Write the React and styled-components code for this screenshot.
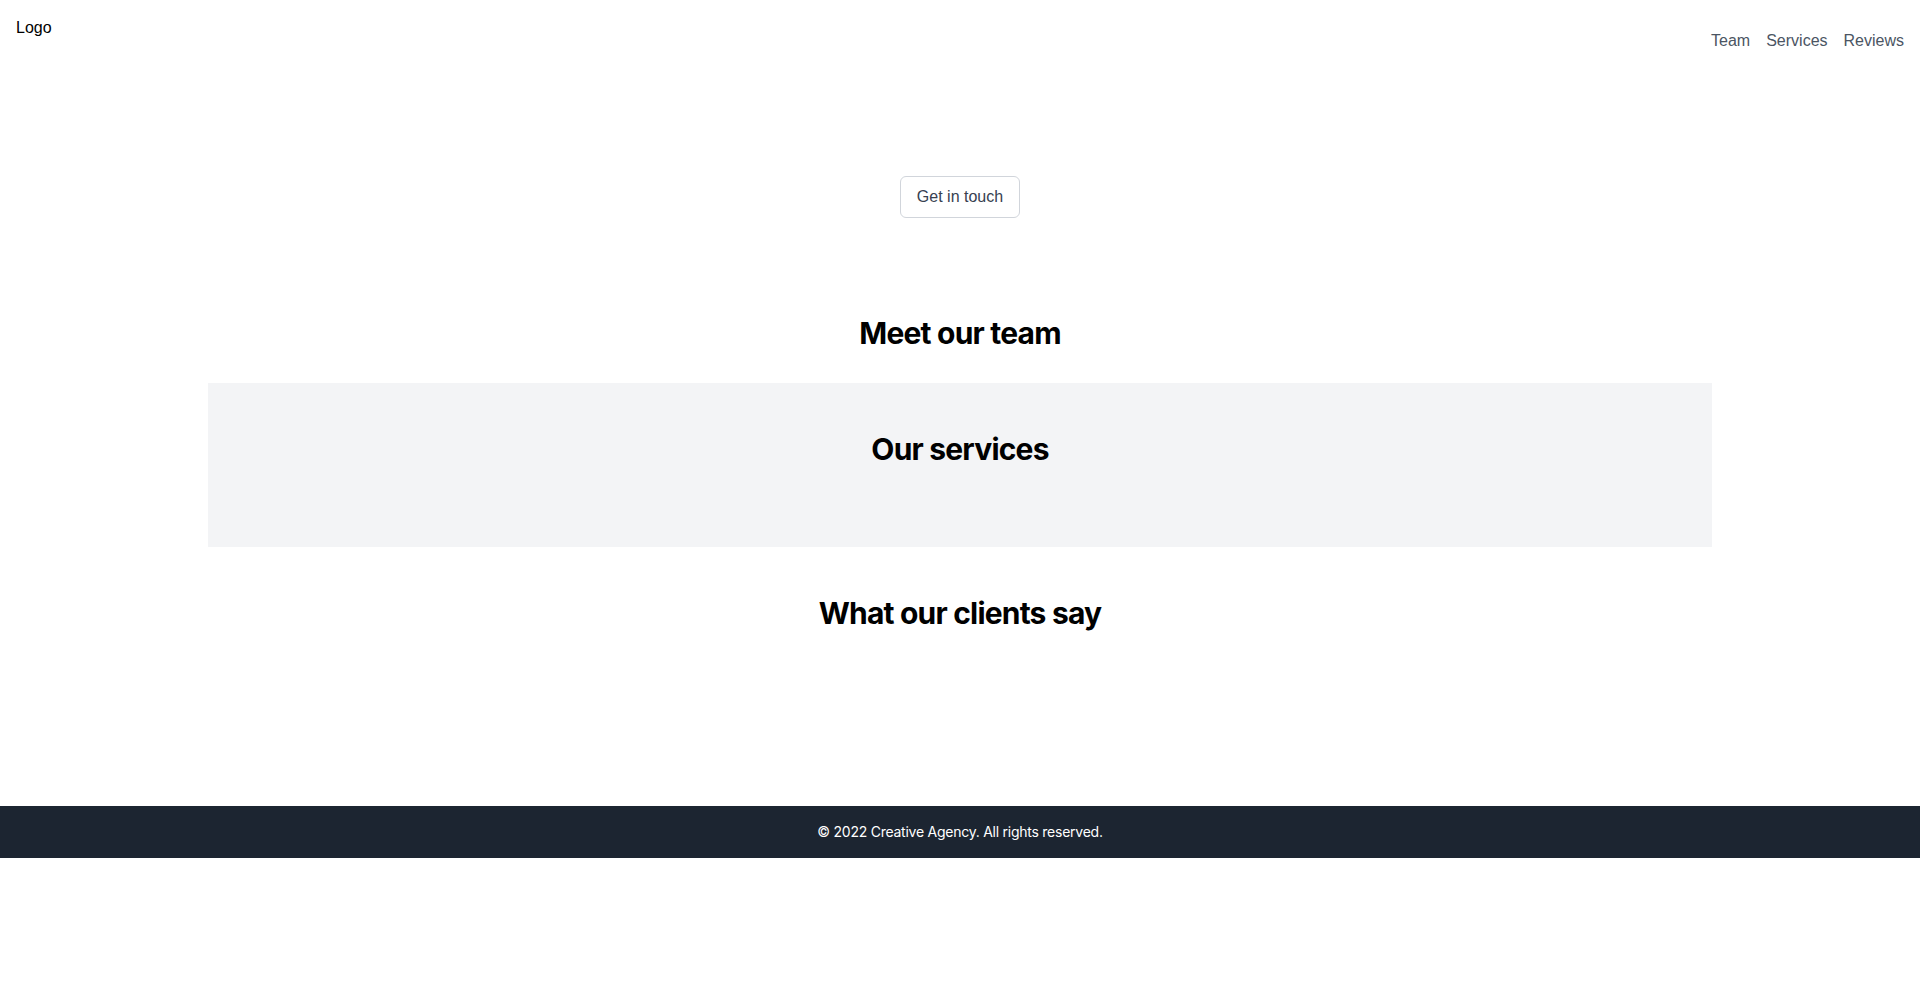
import React from "react";
import styled, { createGlobalStyle } from "styled-components";

const GlobalStyle = createGlobalStyle`
  * { box-sizing: border-box; }
  body {
    margin: 0;
    background: #ffffff;
    color: #000000;
    font-family: "Liberation Sans", Arial, sans-serif;
  }
`;

const Header = styled.header`
  display: flex;
  justify-content: space-between;
  align-items: flex-start;
  padding: 16px;
`;

const Logo = styled.div`
  font-size: 16px;
  line-height: 24px;
  color: #000;
`;

const Nav = styled.nav`
  display: flex;
  gap: 16px;
  margin-top: 13px;
`;

const NavLink = styled.a`
  font-size: 16px;
  line-height: 24px;
  color: #4b5563;
  text-decoration: none;
  cursor: pointer;
`;

const Hero = styled.section`
  display: flex;
  justify-content: center;
  padding: 107px 0 0;
`;

const Button = styled.button`
  font-family: inherit;
  font-size: 16px;
  line-height: 24px;
  color: #374151;
  background: #fff;
  border: 1px solid #d1d5db;
  border-radius: 6px;
  padding: 8px 16px;
  cursor: pointer;
`;

const Section = styled.section`
  max-width: 1504px;
  margin: 0 auto;
  padding: ${(p) => p.$pad};
  background: ${(p) => (p.$muted ? "#f3f4f6" : "transparent")};
  text-align: center;
`;

const Heading = styled.h2`
  margin: 0 0 ${(p) => p.$gap || "32px"};
  font-family: Inter, "Liberation Sans", sans-serif;
  font-size: 30px;
  line-height: 36px;
  font-weight: 700;
  letter-spacing: -0.8px;
  color: #000;
`;

const Footer = styled.footer`
  background: #1c2531;
  padding: 16px;
  text-align: center;
  color: #ffffff;
  font-family: Inter, "Liberation Sans", sans-serif;
  font-size: 14px;
  line-height: 20px;
  letter-spacing: -0.25px;
`;

function App() {
  return (
    <>
      <GlobalStyle />
      <Header>
        <Logo>Logo</Logo>
        <Nav>
          <NavLink>Team</NavLink>
          <NavLink>Services</NavLink>
          <NavLink>Reviews</NavLink>
        </Nav>
      </Header>

      <Hero>
        <Button>Get in touch</Button>
      </Hero>

      <Section $pad="97px 0 0">
        <Heading>Meet our team</Heading>
      </Section>

      <Section $muted $pad="48px 0 48px">
        <Heading>Our services</Heading>
      </Section>

      <Section $pad="48px 0 175px">
        <Heading $gap="0">What our clients say</Heading>
      </Section>

      <Footer>© 2022 Creative Agency. All rights reserved.</Footer>
    </>
  );
}

export default App;
